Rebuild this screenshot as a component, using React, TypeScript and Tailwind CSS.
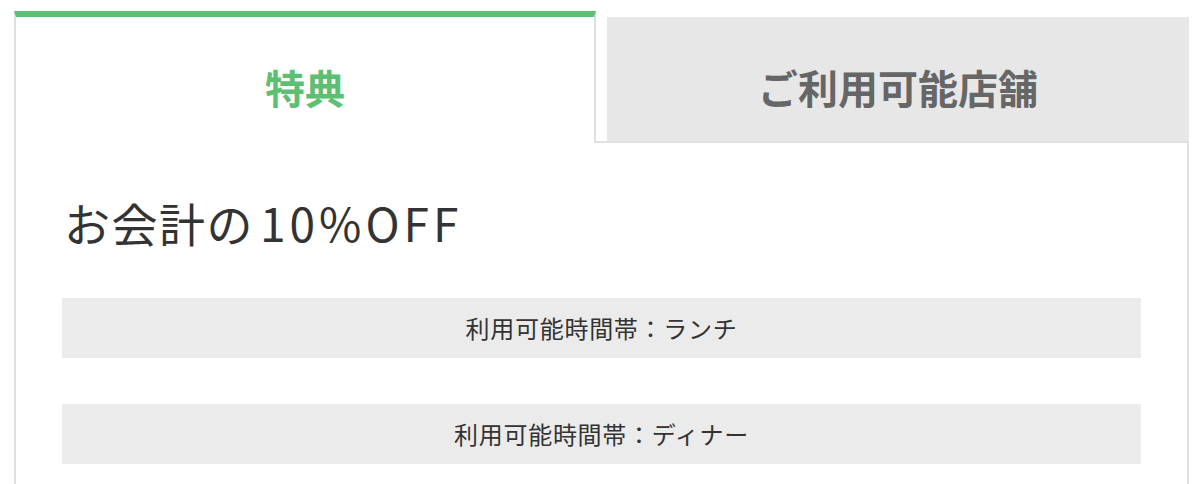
const font = { fontFamily: '"Noto Sans CJK JP", "Noto Sans", sans-serif' }

const slots = ['ランチ', 'ディナー']

export default function App() {
  return (
    <div className="w-[1200px] h-[484px] overflow-hidden bg-white pl-[14px] pr-[11px] pt-[11px]" style={font}>
      {/* tab row: the active tab has no bottom border so it opens into the panel */}
      <div className="flex">
        <div className="w-[582px] h-[132px] border-t-[6px] border-t-[#5cbf74] border-x-2 border-x-[#e0e0e0] bg-white flex items-center justify-center pt-[14px]">
          <span className="text-[40px] font-bold text-[#5cbf74] leading-none">特典</span>
        </div>
        <div className="flex-1 pl-[11px] pt-[6px] border-b-2 border-[#e0e0e0]">
          <div className="h-[124px] bg-[#e7e7e7] flex items-center justify-center pt-[16px]">
            <span className="text-[40px] font-bold text-[#666666] leading-none">ご利用可能店舗</span>
          </div>
        </div>
      </div>
      <div className="border-x-2 border-[#e0e0e0] h-[400px] px-[46px] pt-[49px]">
        <h2 className="text-[46px] leading-[60px] text-[#333333] pl-[2px] tracking-[1.5px]">
          お会計の<span className="ml-[6px] tracking-[4px]">10%OFF</span>
        </h2>
        <div className="mt-[46px] flex flex-col gap-[46px]">
          {slots.map((s) => (
            <div key={s} className="h-[60px] bg-[#ebebeb] flex items-center justify-center text-[24px] tracking-[0.03em] text-[#333333]">
              利用可能時間帯：{s}
            </div>
          ))}
        </div>
      </div>
    </div>
  )
}
